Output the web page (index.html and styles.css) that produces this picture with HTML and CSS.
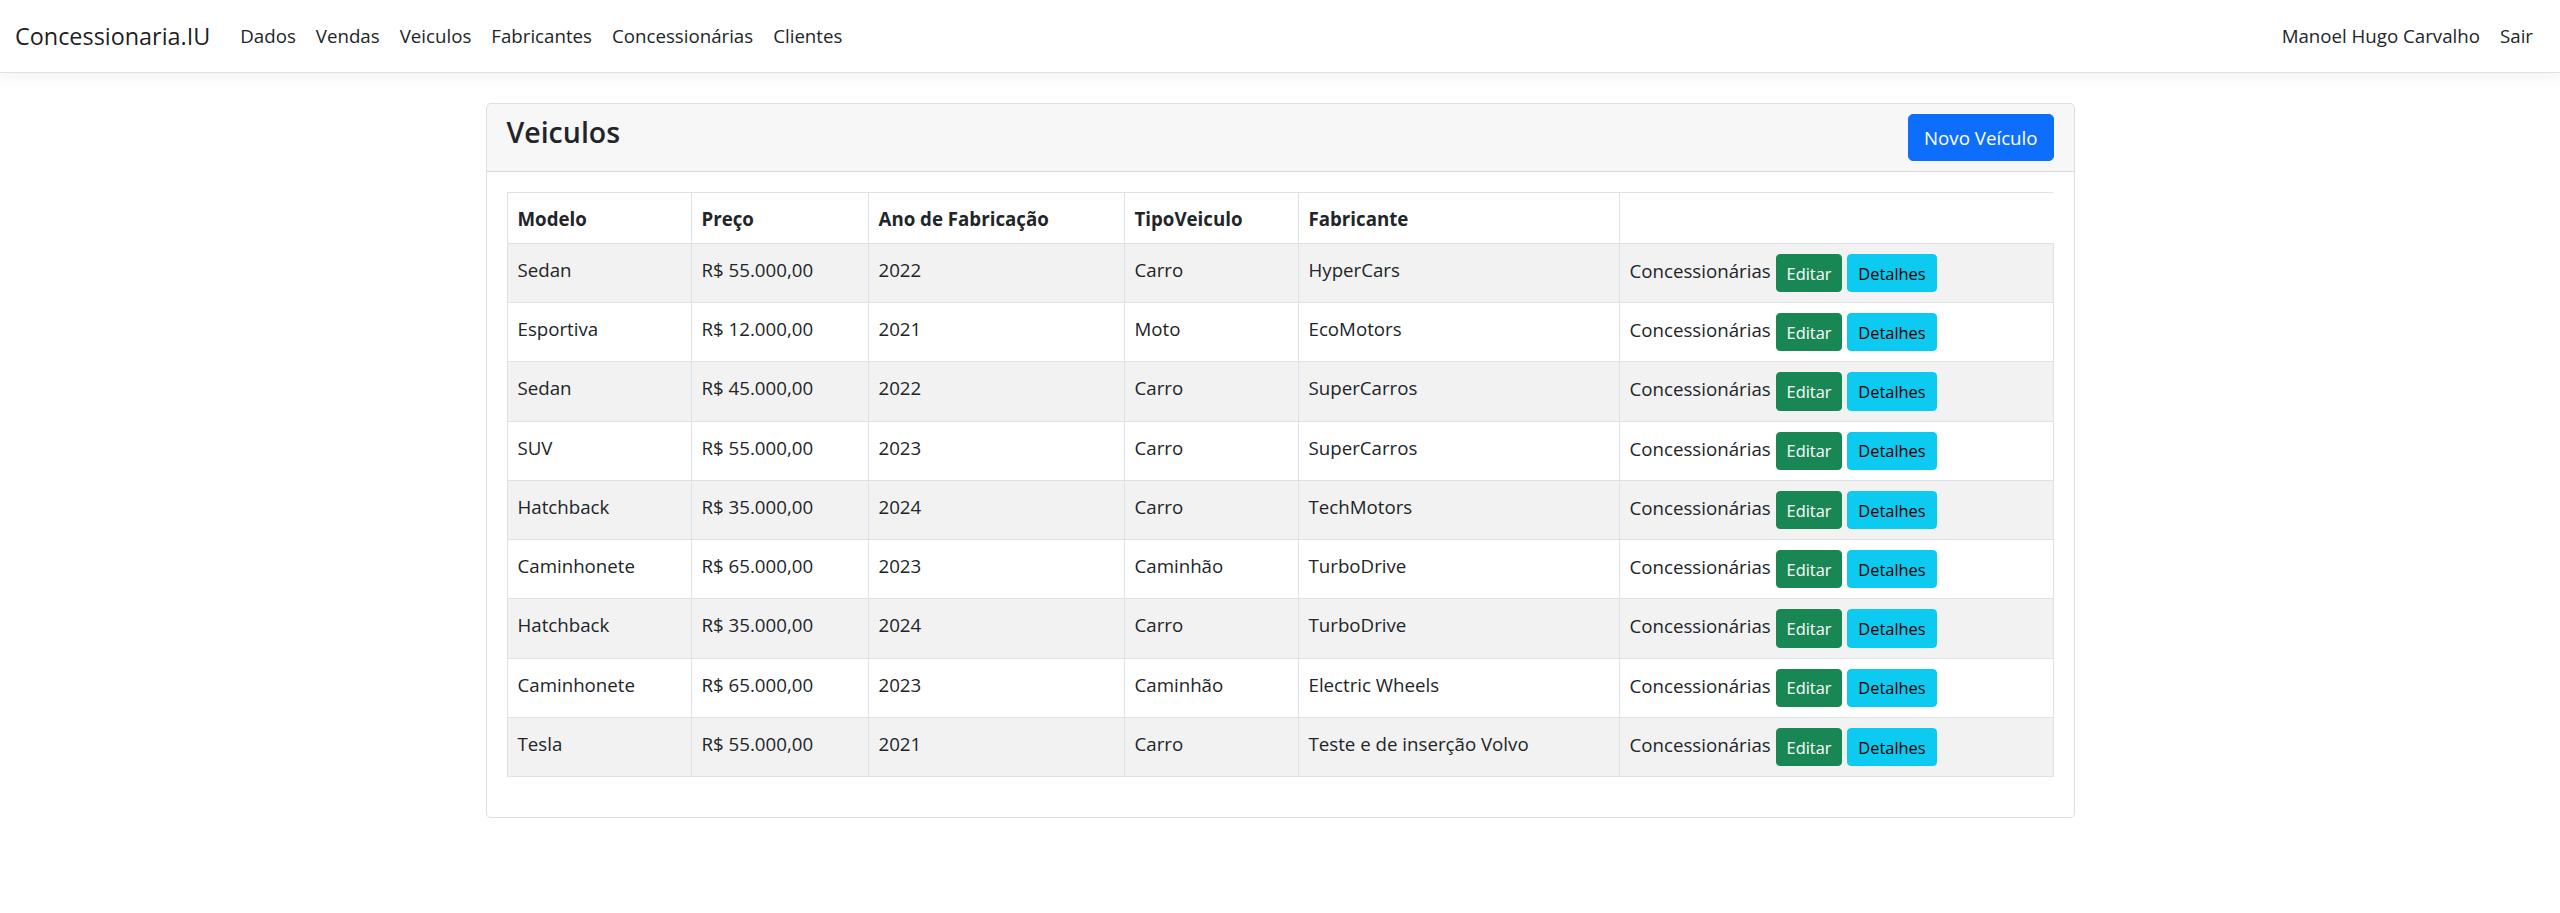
FILE: index.html
```html
<!DOCTYPE html>
<html lang="pt-BR">
<head>
<meta charset="utf-8">
<title>Veiculos - Concessionaria.IU</title>
<link rel="stylesheet" href="styles.css">
</head>
<body>
<header class="navbar">
  <a class="brand" href="#">Concessionaria.IU</a>
  <ul class="nav">
    <li><a class="nav-link" href="#">Dados</a></li>
    <li><a class="nav-link" href="#">Vendas</a></li>
    <li><a class="nav-link" href="#">Veiculos</a></li>
    <li><a class="nav-link" href="#">Fabricantes</a></li>
    <li><a class="nav-link" href="#">Concessionárias</a></li>
    <li><a class="nav-link" href="#">Clientes</a></li>
  </ul>
  <ul class="nav nav-right">
    <li><a class="nav-link" href="#">Manoel Hugo Carvalho</a></li>
    <li><a class="nav-link" href="#">Sair</a></li>
  </ul>
</header>

<main class="container">
  <section class="card">
    <div class="card-header">
      <h4 class="card-title">Veiculos</h4>
      <a class="btn btn-primary" href="#">Novo Veículo</a>
    </div>
    <div class="card-body">
      <table class="table">
        <colgroup>
          <col class="col-modelo">
          <col class="col-preco">
          <col class="col-ano">
          <col class="col-tipo">
          <col class="col-fab">
          <col>
        </colgroup>
        <thead>
          <tr>
            <th>Modelo</th>
            <th>Preço</th>
            <th>Ano de Fabricação</th>
            <th>TipoVeiculo</th>
            <th>Fabricante</th>
            <th class="th-actions"></th>
          </tr>
        </thead>
        <tbody>
          <tr>
            <td>Sedan</td><td>R$ 55.000,00</td><td>2022</td><td>Carro</td><td>HyperCars</td>
            <td class="actions">Concessionárias <a class="btn-sm btn-success" href="#">Editar</a> <a class="btn-sm btn-info" href="#">Detalhes</a></td>
          </tr>
          <tr>
            <td>Esportiva</td><td>R$ 12.000,00</td><td>2021</td><td>Moto</td><td>EcoMotors</td>
            <td class="actions">Concessionárias <a class="btn-sm btn-success" href="#">Editar</a> <a class="btn-sm btn-info" href="#">Detalhes</a></td>
          </tr>
          <tr>
            <td>Sedan</td><td>R$ 45.000,00</td><td>2022</td><td>Carro</td><td>SuperCarros</td>
            <td class="actions">Concessionárias <a class="btn-sm btn-success" href="#">Editar</a> <a class="btn-sm btn-info" href="#">Detalhes</a></td>
          </tr>
          <tr>
            <td>SUV</td><td>R$ 55.000,00</td><td>2023</td><td>Carro</td><td>SuperCarros</td>
            <td class="actions">Concessionárias <a class="btn-sm btn-success" href="#">Editar</a> <a class="btn-sm btn-info" href="#">Detalhes</a></td>
          </tr>
          <tr>
            <td>Hatchback</td><td>R$ 35.000,00</td><td>2024</td><td>Carro</td><td>TechMotors</td>
            <td class="actions">Concessionárias <a class="btn-sm btn-success" href="#">Editar</a> <a class="btn-sm btn-info" href="#">Detalhes</a></td>
          </tr>
          <tr>
            <td>Caminhonete</td><td>R$ 65.000,00</td><td>2023</td><td>Caminhão</td><td>TurboDrive</td>
            <td class="actions">Concessionárias <a class="btn-sm btn-success" href="#">Editar</a> <a class="btn-sm btn-info" href="#">Detalhes</a></td>
          </tr>
          <tr>
            <td>Hatchback</td><td>R$ 35.000,00</td><td>2024</td><td>Carro</td><td>TurboDrive</td>
            <td class="actions">Concessionárias <a class="btn-sm btn-success" href="#">Editar</a> <a class="btn-sm btn-info" href="#">Detalhes</a></td>
          </tr>
          <tr>
            <td>Caminhonete</td><td>R$ 65.000,00</td><td>2023</td><td>Caminhão</td><td>Electric Wheels</td>
            <td class="actions">Concessionárias <a class="btn-sm btn-success" href="#">Editar</a> <a class="btn-sm btn-info" href="#">Detalhes</a></td>
          </tr>
          <tr>
            <td>Tesla</td><td>R$ 55.000,00</td><td>2021</td><td>Carro</td><td>Teste e de inserção Volvo</td>
            <td class="actions">Concessionárias <a class="btn-sm btn-success" href="#">Editar</a> <a class="btn-sm btn-info" href="#">Detalhes</a></td>
          </tr>
        </tbody>
      </table>
    </div>
  </section>
</main>
</body>
</html>
```
FILE: styles.css
```css
* {
  box-sizing: border-box;
}

html,
body {
  margin: 0;
  padding: 0;
}

body {
  font-family: "Open Sans", "Noto Sans", sans-serif;
  font-size: 18.7px;
  line-height: 30px;
  color: #212529;
  background: #fff;
}

a {
  color: inherit;
  text-decoration: none;
}

/* ---------- navbar ---------- */
.navbar {
  display: flex;
  align-items: flex-start;
  padding: 10px 17px 12px 15px;
  border-bottom: 1px solid #dee2e6;
  box-shadow: 0 5px 15px rgba(0, 0, 0, 0.05);
  background: #fff;
}

.brand {
  font-size: 23.4px;
  line-height: 37.5px;
  padding: 7.5px 0 5px;
  margin-right: 20px;
  color: rgba(0, 0, 0, 0.9);
  white-space: nowrap;
}

.nav {
  display: flex;
  list-style: none;
  margin: 0;
  padding: 0;
}

.nav-right {
  margin-left: auto;
}

.nav-link {
  display: block;
  padding: 11px 10px 9px;
  color: #212529;
  white-space: nowrap;
}

/* ---------- layout ---------- */
.container {
  width: 1589px;
  margin: 30px auto 0;
}

.card {
  border: 1px solid rgba(0, 0, 0, 0.125);
  border-radius: 5px;
  background: #fff;
}

.card-header {
  display: flex;
  justify-content: space-between;
  align-items: flex-start;
  padding: 10px 20px;
  background: rgba(0, 0, 0, 0.03);
  border-bottom: 1px solid rgba(0, 0, 0, 0.125);
  border-radius: 4px 4px 0 0;
}

.card-title {
  margin: 0;
  font-size: 28.5px;
  line-height: 36px;
  font-weight: 600;
  color: #212529;
}

.card-body {
  padding: 20px;
}

/* ---------- buttons ---------- */
.btn {
  display: inline-block;
  font-size: 18.7px;
  line-height: 30px;
  padding: 8.4px 15px 6.6px;
  border: 1px solid transparent;
  border-radius: 5px;
  white-space: nowrap;
}

.btn-primary {
  background: #0d6efd;
  border-color: #0d6efd;
  color: #fff;
}

.btn-sm {
  display: inline-block;
  vertical-align: middle;
  font-size: 16.4px;
  line-height: 26.25px;
  padding: 5.75px 10px 4.25px;
  border: 1px solid transparent;
  border-radius: 4px;
  white-space: nowrap;
}

.btn-success {
  background: #198754;
  border-color: #198754;
  color: #fff;
}

.btn-info {
  background: #0dcaf0;
  border-color: #0dcaf0;
  color: #000;
}

/* ---------- table ---------- */
.table {
  width: 100%;
  table-layout: fixed;
  border-collapse: collapse;
  margin-bottom: 20px;
}

.col-modelo { width: 184px; }
.col-preco { width: 177px; }
.col-ano { width: 256px; }
.col-tipo { width: 174px; }
.col-fab { width: 321px; }

.table th,
.table td {
  border: 1px solid #dee2e6;
  padding: 11px 10px 9px;
  text-align: left;
  vertical-align: top;
  white-space: nowrap;
}

.table th {
  font-weight: 700;
}

.table th.th-actions {
  border-right: none;
}

.table tbody tr:nth-child(odd) td {
  background: #f2f2f2;
}

.table td.actions {
  padding-top: 10px;
  padding-bottom: 10px;
}
```
